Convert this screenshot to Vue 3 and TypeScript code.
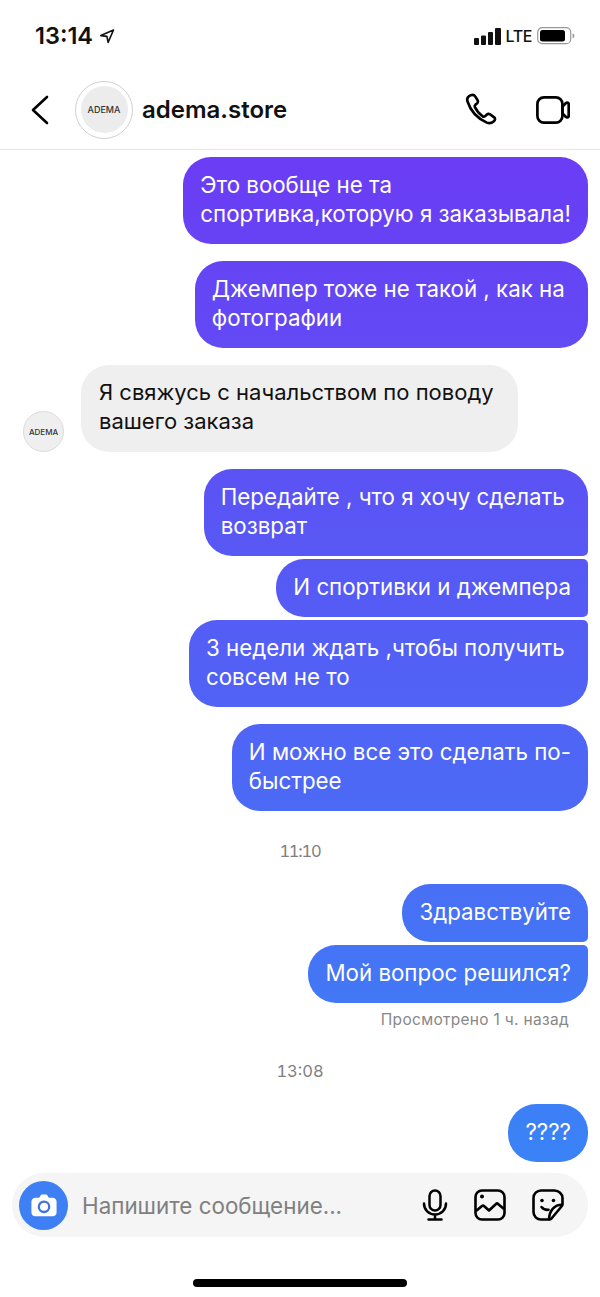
<script setup lang="ts">
type Bubble = { text: string[]; shape?: string };
type Row =
  | { kind: "out"; bubbles: Bubble[] }
  | { kind: "in"; text: string[] };

// trailing spaces are on purpose: a wrapped line keeps its space, so the bubble is wider
const topRows: Row[] = [
  { kind: "out", bubbles: [{ text: ["Это вообще не та ", "спортивка,которую я заказывала!"] }] },
  { kind: "out", bubbles: [{ text: ["Джемпер тоже не такой , как на ", "фотографии"] }] },
  { kind: "in", text: ["Я свяжусь с начальством по поводу ", "вашего заказа"] },
  {
    kind: "out",
    bubbles: [
      { text: ["Передайте , что я хочу сделать ", "возврат"], shape: "first" },
      { text: ["И спортивки и джемпера"], shape: "mid" },
      { text: ["3 недели ждать ,чтобы получить ", "совсем не то"], shape: "last" },
    ],
  },
  { kind: "out", bubbles: [{ text: ["И можно все это сделать по-", "быстрее"] }] },
];

const middle: Bubble[] = [
  { text: ["Здравствуйте"], shape: "first" },
  { text: ["Мой вопрос решился?"], shape: "last" },
];
</script>

<template>
  <div class="screen">
    <div class="status">
      <div class="clock">
        <span>13:14</span>
        <svg width="16" height="16" viewBox="0 0 16 16" fill="none" stroke="#111" stroke-width="1.6" stroke-linejoin="round">
          <path d="M14.5 2 1.8 7.6l6.1.8 1.2 6z" />
        </svg>
      </div>
      <div class="indicators">
        <svg class="bars" width="27" height="17" viewBox="0 0 27 17" fill="#111">
          <rect x="0" y="10" width="5" height="7" rx="1" />
          <rect x="7" y="7.5" width="5" height="9.5" rx="1" />
          <rect x="14" y="4" width="5" height="13" rx="1" />
          <rect x="21" y="0" width="6" height="17" rx="1" />
        </svg>
        <span class="lte">LTE</span>
        <svg width="38" height="18" viewBox="0 0 38 18" fill="none">
          <rect x="0.7" y="0.7" width="33" height="16" rx="4.5" stroke="#999" stroke-width="1.2" />
          <rect x="3" y="3" width="25" height="11.5" rx="2.5" fill="#000" />
          <path d="M35.6 6.2c1.3.5 1.8 1.5 1.8 2.6s-.5 2.1-1.8 2.6z" fill="#999" />
        </svg>
      </div>
    </div>

    <header class="nav">
      <svg class="back" width="20" height="30" viewBox="0 0 20 30" fill="none" stroke="#000" stroke-width="2.6" stroke-linecap="round" stroke-linejoin="round">
        <path d="M17 2 3 15l14 13" />
      </svg>
      <div class="ring">
        <div class="logo">ADEMA</div>
      </div>
      <div class="name">adema.store</div>
      <svg class="call" width="33" height="33" viewBox="0 0 34 34" fill="none" stroke="#000" stroke-width="2.7" stroke-linejoin="round">
        <path d="M5.5 2.5C3 3.7 1.8 6 2.5 8.5c3 9.5 10 17.500 20 22 2.500 1 5 .5 7-1.200 1.800-1.500 2-3.300.3-4.500l-4-2.700c-1.200-.8-2.400-.7-3.500.3l-1.500 1.400c-.8.7-1.700.8-2.600.2-3.500-2.400-6.300-5.700-8-9.500-.4-1-.2-1.800.6-2.500l1.500-1.200c1.100-1 1.300-2.100.7-3.400L10.500 3.500C9.500 1.800 7.500 1.500 5.500 2.500z" />
      </svg>
      <svg class="video" width="34" height="28" viewBox="0 0 34 28" fill="none" stroke="#000" stroke-width="2.7" stroke-linejoin="round">
        <rect x="1.4" y="1.4" width="25" height="25.2" rx="6.5" />
        <path d="M26.5 10.5 30 7c1.300-1 2.700-.3 2.700 1.300v11.400c0 1.600-1.400 2.300-2.700 1.300l-3.500-3.500z" />
      </svg>
    </header>

    <main class="thread">
      <template v-for="(row, i) in topRows" :key="i">
        <div v-if="row.kind === 'out'" class="group">
          <div v-for="(b, j) in row.bubbles" :key="j" class="bubble out" :class="b.shape">
            <div v-for="line in b.text" :key="line">{{ line }}</div>
          </div>
        </div>
        <div v-else class="incoming">
          <div class="mini">ADEMA</div>
          <div class="bubble in">
            <div v-for="line in row.text" :key="line">{{ line }}</div>
          </div>
        </div>
      </template>

      <div class="stamp first-stamp">11:10</div>

      <div class="group">
        <div v-for="(b, j) in middle" :key="j" class="bubble out" :class="b.shape">
          <div v-for="line in b.text" :key="line">{{ line }}</div>
        </div>
      </div>
      <div class="seen">Просмотрено 1 ч. назад</div>

      <div class="stamp second-stamp">13:08</div>

      <div class="group">
        <div class="bubble out"><div>????</div></div>
      </div>
    </main>

    <footer class="composer">
      <div class="camera">
        <svg width="26" height="23" viewBox="0 0 30 26">
          <path d="M5 4h4.500l1.300-2.200C11.400.7 12.100.3 13 .3h4c.9 0 1.600.4 2.200 1.500L20.500 4H25c2.500 0 4.500 2 4.500 4.500V21c0 2.500-2 4.500-4.500 4.500H5C2.500 25.500.5 23.500.5 21V8.500C.5 6 2.500 4 5 4z" fill="#fff" />
          <circle cx="15" cy="14.500" r="6" fill="none" stroke="#3f73e0" stroke-width="2.600" />
        </svg>
      </div>
      <div class="placeholder">Напишите сообщение...</div>
      <svg class="tool mic" width="26" height="32" viewBox="0 0 26 32" fill="none" stroke="#000" stroke-width="2.5" stroke-linecap="round">
        <rect x="7.5" y="1.5" width="11" height="20" rx="5.5" />
        <path d="M2 14.5c0 6.500 4.800 11 11 11s11-4.500 11-11M13 25.500v5M6.500 30.500h13" />
      </svg>
      <svg class="tool pic" width="32" height="32" viewBox="0 0 32 32" fill="none" stroke="#000" stroke-width="2.6" stroke-linejoin="round">
        <rect x="1.5" y="1.5" width="29" height="29" rx="6.5" />
        <path d="M2 22l6-5c.6-.5 1.400-.5 2 0l5 4.500 7-6.500c.6-.6 1.500-.6 2.100 0L30 20" />
        <circle cx="8" cy="7.5" r="2" fill="#000" stroke="none" />
      </svg>
      <svg class="tool sticker" width="32" height="32" viewBox="0 0 32 32" fill="none" stroke="#000" stroke-width="2.6" stroke-linejoin="round" stroke-linecap="round">
        <path d="M17 30.500H9c-4.200 0-7.500-3.300-7.500-7.500V9C1.500 4.800 4.800 1.500 9 1.500h13.500c4.200 0 8 3.300 8 7.500v6c0 1-.4 1.800-1 2.500L19.500 29.500c-.7.700-1.500 1-2.500 1z" />
        <path d="M30 15.800c-7.500 0-12.500 5.500-13 14.500" />
        <path d="M9.500 18c1.500 2 3.800 3 7 2.800" />
        <circle cx="10" cy="11.500" r="1.800" fill="#000" stroke="none" />
        <circle cx="21.500" cy="11.500" r="1.800" fill="#000" stroke="none" />
      </svg>
    </footer>

    <div class="home-row"><div class="home"></div></div>
  </div>
</template>

<style>
html,
body {
  margin: 0;
  background: #fff;
}
</style>

<style scoped>
.screen {
  width: 600px;
  height: 1297px;
  overflow: hidden;
  display: flex;
  flex-direction: column;
  font-family: Inter, "Noto Sans", sans-serif;
  color: #000;
  background: #fff;
}

.status {
  height: 70px;
  flex: none;
  box-sizing: border-box;
  padding: 23px 25px 0 35px;
  display: flex;
  justify-content: space-between;
  align-items: flex-start;
}
.clock {
  display: flex;
  align-items: center;
  gap: 6px;
  font-size: 23.5px;
  font-weight: 600;
  line-height: 26px;
  color: #111;
}
.indicators {
  display: flex;
  align-items: center;
  gap: 5px;
  height: 26px;
}
.lte {
  font-size: 16px;
  font-weight: 500;
  color: #111;
  letter-spacing: -0.4px;
}

.nav {
  height: 79px;
  flex: none;
  display: flex;
  align-items: center;
  padding: 0 30px;
  border-bottom: 1px solid #e4e4e4;
  margin-bottom: 7px;
}
.back {
  margin-right: 26px;
}
.ring {
  width: 58px;
  height: 58px;
  box-sizing: border-box;
  border: 1.5px solid #d0d0d0;
  border-radius: 50%;
  display: flex;
  align-items: center;
  justify-content: center;
  margin-left: -1px;
  margin-right: 9px;
}
.logo {
  width: 47px;
  height: 47px;
  border-radius: 50%;
  background: #ececec;
  display: flex;
  align-items: center;
  justify-content: center;
  font-size: 9px;
  font-weight: 500;
  color: #333;
}
.name {
  font-size: 24px;
  font-weight: 600;
  flex: 1;
  color: #111;
}
.call {
  margin-right: 38px;
}

.thread {
  flex: 1;
  display: flex;
  flex-direction: column;
  align-items: stretch;
  padding-right: 12px;
}
.group {
  display: flex;
  flex-direction: column;
  align-items: flex-end;
  gap: 3px;
  margin-bottom: 17px;
}
.group:last-child {
  margin-bottom: 0;
}
.bubble {
  box-sizing: border-box;
  padding: 12.5px 17px 16.5px;
  border-radius: 28px;
  font-size: 22px;
  line-height: 29px;
  white-space: pre;
}
.out {
  color: #fff;
  font-size: 22.3px;
  background-image: linear-gradient(180deg, #6b3cf4 150px, #3b82f6 1150px);
  background-attachment: fixed;
}
.first {
  border-bottom-right-radius: 5px;
}
.mid {
  border-top-right-radius: 5px;
  border-bottom-right-radius: 5px;
}
.last {
  border-top-right-radius: 5px;
}
.incoming {
  display: flex;
  align-items: flex-end;
  gap: 17px;
  padding-left: 23px;
  margin-bottom: 17px;
}
.mini {
  width: 41px;
  height: 41px;
  box-sizing: border-box;
  border: 1px solid #dcdcdc;
  border-radius: 50%;
  background: #efefef;
  display: flex;
  align-items: center;
  justify-content: center;
  font-size: 8px;
  font-weight: 500;
  color: #333;
}
.in {
  background: #efefef;
  color: #111;
  padding-left: 18px;
  padding-right: 18px;
}
.stamp {
  margin-right: -12px;
  text-align: center;
  font-size: 16.5px;
  font-variant-numeric: tabular-nums;
  line-height: 20px;
  color: #808080;
}
.first-stamp {
  margin-top: 13px;
  margin-bottom: 23px;
  letter-spacing: -1.2px;
}
.second-stamp {
  margin-top: 32px;
  margin-bottom: 23px;
}
.seen {
  margin-top: -9px;
  padding-right: 19px;
  text-align: right;
  font-size: 15.5px;
  letter-spacing: 0.3px;
  line-height: 18px;
  color: #888;
}

.composer {
  margin: 0 12px;
  height: 64px;
  flex: none;
  border-radius: 32px;
  background: #f5f5f5;
  display: flex;
  align-items: center;
  padding: 0 24px 0 7px;
}
.camera {
  width: 49px;
  height: 49px;
  border-radius: 50%;
  background: #3e80f3;
  display: flex;
  align-items: center;
  justify-content: center;
  margin-right: 14px;
}
.placeholder {
  flex: 1;
  font-size: 22.4px;
  color: #808080;
}
.pic {
  margin: 0 26px;
}
.home-row {
  flex: none;
  height: 60px;
  display: flex;
  align-items: flex-start;
  justify-content: center;
  padding-top: 42px;
  box-sizing: border-box;
}
.home {
  width: 214px;
  height: 8px;
  border-radius: 4px;
  background: #000;
}
</style>
